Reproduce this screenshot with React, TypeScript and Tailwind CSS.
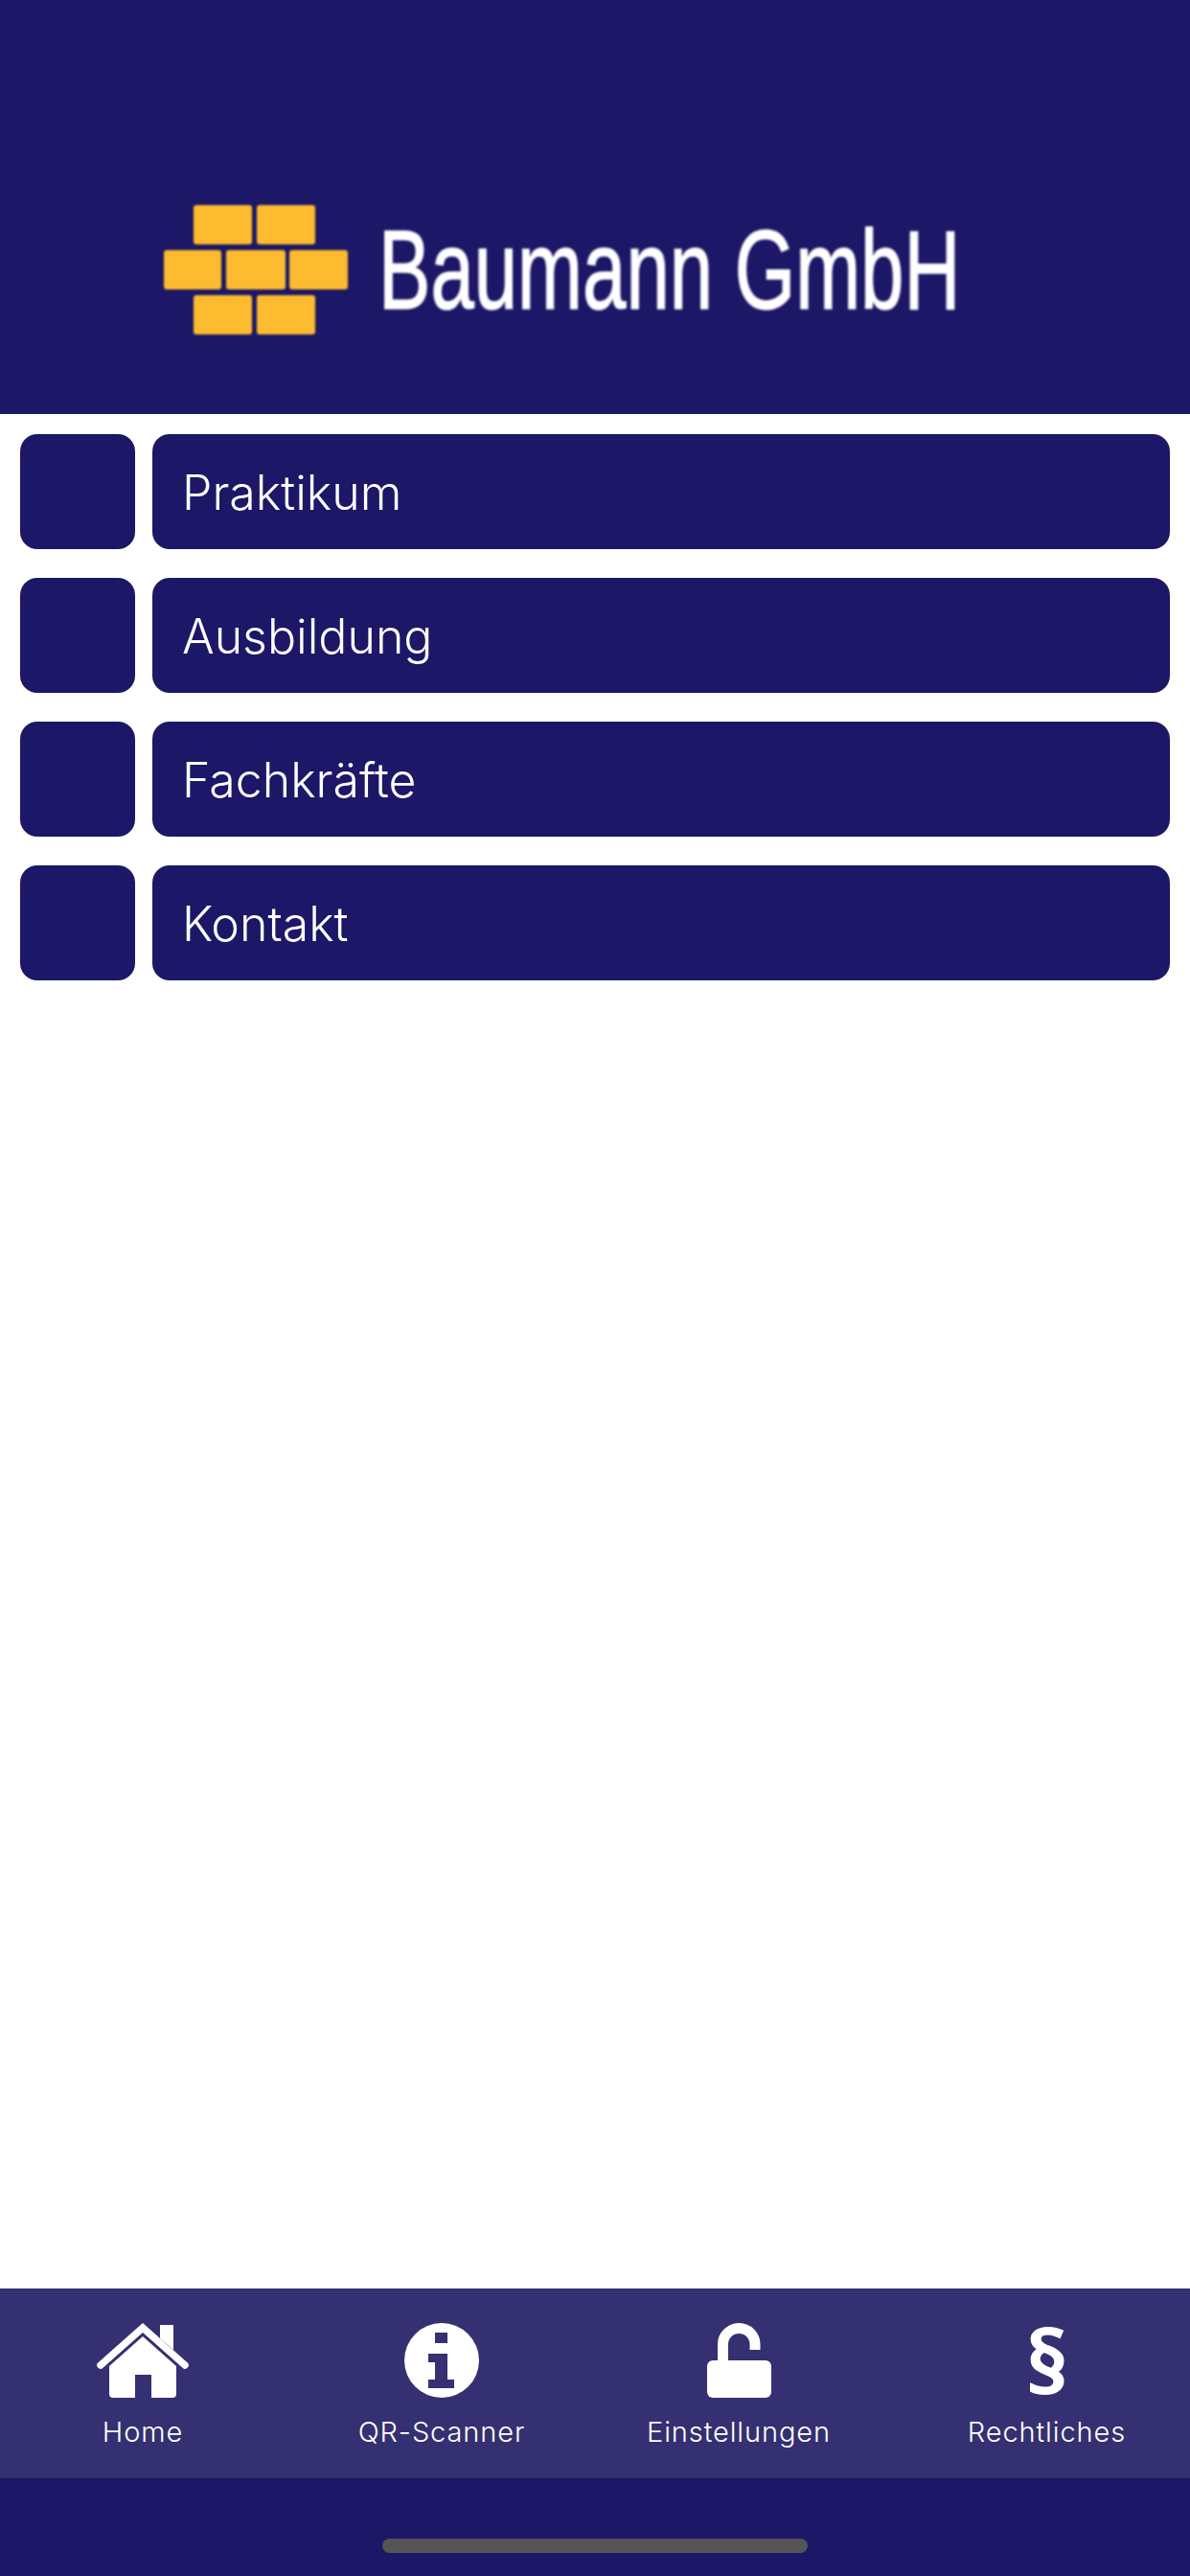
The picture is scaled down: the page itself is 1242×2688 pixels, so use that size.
const menuItems = ["Praktikum", "Ausbildung", "Fachkräfte", "Kontakt"];

function BrickLogo() {
  return (
    <svg viewBox="0 0 192 135" className="w-[192px] h-[135px] shrink-0" fill="#fdbb2f">
      <rect x="31" y="0" width="61" height="41" rx="3" />
      <rect x="97" y="0" width="61" height="41" rx="3" />
      <rect x="0" y="47" width="60" height="41" rx="3" />
      <rect x="65" y="47" width="62" height="41" rx="3" />
      <rect x="131" y="47" width="61" height="41" rx="3" />
      <rect x="31" y="94" width="61" height="41" rx="3" />
      <rect x="97" y="94" width="61" height="41" rx="3" />
    </svg>
  );
}

function HomeIcon() {
  return (
    <svg viewBox="0 0 96 78" className="w-[96px] h-[78px]" fill="#fff">
      <path d="M66 2h14v26l-14-12z" />
      <path d="M4 44 48 5l44 39" fill="none" stroke="#fff" strokeWidth="7.5" strokeLinecap="round" strokeLinejoin="miter" />
      <path fillRule="evenodd" d="M13 45 48 14l35 31v29q0 4-4 4H57V54H40v24H17q-4 0-4-4z" />
    </svg>
  );
}

function InfoIcon() {
  return (
    <svg viewBox="0 0 78 78" className="w-[78px] h-[78px]" fill="#fff">
      <path
        fillRule="evenodd"
        d="M39 0a39 39 0 1 1 0 78a39 39 0 1 1 0-78zM32 10v11h13V10zM25 32v9h7v18h-7v9h27v-9h-7V32z"
      />
    </svg>
  );
}

function LockIcon() {
  return (
    <svg viewBox="0 0 67 78" className="w-[67px] h-[78px]" fill="#fff">
      <path d="M16.5 42V22.25A16.75 16.75 0 0 1 50 22.25V28" fill="none" stroke="#fff" strokeWidth="11" />
      <rect x="0" y="39" width="67" height="39" rx="6" />
    </svg>
  );
}

function ParagraphIcon() {
  return (
    <span className="block h-[78px] text-center text-[92px] leading-[78px] font-bold text-white font-['Open_Sans',sans-serif]">§</span>
  );
}

const tabs = [
  { label: "Home", icon: <HomeIcon />, className: "w-[298px]" },
  { label: "QR-Scanner", icon: <InfoIcon />, className: "w-[326px]" },
  { label: "Einstellungen", icon: <LockIcon />, className: "w-[294px]" },
  { label: "Rechtliches", icon: <ParagraphIcon />, className: "w-[324px] pl-[25px]" },
];

export default function App() {
  return (
    <div className="min-h-[2688px] flex flex-col bg-white font-['Inter',sans-serif]">
      {/* Header with logo */}
      <header className="h-[432px] bg-[#1c1766] pt-[214px] pl-[171px] overflow-hidden">
        <div className="blur-[1px] flex items-start gap-[32px]">
          <BrickLogo />
          <span className="block origin-left scale-x-[0.703] text-white text-[116px] leading-[136px] [-webkit-text-stroke:1.5px_white] font-['Liberation_Sans',sans-serif] whitespace-nowrap">
            Baumann GmbH
          </span>
        </div>
      </header>

      {/* Menu */}
      <main className="flex-1 flex flex-col gap-[30px] pt-[21px] px-[21px]">
        {menuItems.map((item) => (
          <div key={item} className="flex gap-[18px] h-[120px]">
            <div className="w-[120px] rounded-[18px] bg-[#1c1766]" />
            <div className="flex-1 rounded-[18px] bg-[#1c1766] pl-[31px] pt-[2px] flex items-center text-white text-[50px] font-[350]">
              {item}
            </div>
          </div>
        ))}
      </main>

      {/* Tab bar */}
      <nav className="h-[198px] bg-[#343071] flex pt-[36px]">
        {tabs.map((tab) => (
          <div key={tab.label} className={`${tab.className} flex flex-col items-center`}>
            {tab.icon}
            <span className="mt-[16px] text-white text-[29px] leading-[40px] font-light tracking-[0.9px] whitespace-nowrap">{tab.label}</span>
          </div>
        ))}
      </nav>

      {/* Home indicator */}
      <div className="h-[102px] bg-[#1c1766] flex justify-center pt-[63px]">
        <div className="w-[444px] h-[15px] rounded-full bg-[#555555]" />
      </div>
    </div>
  );
}
